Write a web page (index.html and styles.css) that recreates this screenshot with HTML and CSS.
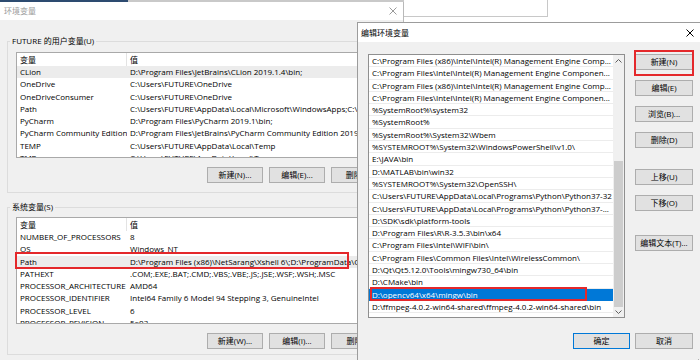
FILE: index.html
```html
<!DOCTYPE html>
<html lang="zh-CN">
<head>
    <meta charset="UTF-8">
    <title>环境变量</title>
    <link rel="stylesheet" href="styles.css">
</head>
<body>
<div class="desktop">
    <div class="strip"></div>
    <div class="window behind"></div>

    <!-- back dialog -->
    <div class="window env">
        <div class="titlebar">
            <span class="title">环境变量</span>
            <span class="close dim">
                <svg width="8" height="8" viewBox="0 0 8 8"><path d="M0.5 0.5L7.5 7.5M7.5 0.5L0.5 7.5" stroke="#9a9a9a" stroke-width="1" fill="none"/></svg>
            </span>
        </div>
        <div class="dlg-body">
            <fieldset class="group user">
                <legend>FUTURE 的用户变量(U)</legend>
                <div class="list vars user-list">
                    <div class="lhead"><span class="c1">变量</span><span class="c2">值</span></div>
                    <div class="lrow hl"><span class="c1">CLion</span><span class="c2">D:\Program Files\JetBrains\CLion 2019.1.4\bin;</span></div>
                    <div class="lrow"><span class="c1">OneDrive</span><span class="c2">C:\Users\FUTURE\OneDrive</span></div>
                    <div class="lrow"><span class="c1">OneDriveConsumer</span><span class="c2">C:\Users\FUTURE\OneDrive</span></div>
                    <div class="lrow"><span class="c1">Path</span><span class="c2">C:\Users\FUTURE\AppData\Local\Microsoft\WindowsApps;C:\Program Files</span></div>
                    <div class="lrow"><span class="c1">PyCharm</span><span class="c2">D:\Program Files\PyCharm 2019.1\bin;</span></div>
                    <div class="lrow"><span class="c1">PyCharm Community Edition</span><span class="c2">D:\Program Files\JetBrains\PyCharm Community Edition 2019.1\bin;</span></div>
                    <div class="lrow"><span class="c1">TEMP</span><span class="c2">C:\Users\FUTURE\AppData\Local\Temp</span></div>
                    <div class="lrow"><span class="c1">TMP</span><span class="c2">C:\Users\FUTURE\AppData\Local\Temp</span></div>
                </div>
                <div class="btnrow user-btns">
                    <button class="btn wide">新建(N)...</button>
                    <button class="btn wide">编辑(E)...</button>
                    <button class="btn wide">删除(D)</button>
                </div>
            </fieldset>

            <fieldset class="group sys">
                <legend>系统变量(S)</legend>
                <div class="listwrap">
                    <div class="list vars sys-list">
                        <div class="lhead"><span class="c1">变量</span><span class="c2">值</span></div>
                        <div class="lrow"><span class="c1">NUMBER_OF_PROCESSORS</span><span class="c2">8</span></div>
                        <div class="lrow"><span class="c1">OS</span><span class="c2">Windows_NT</span></div>
                        <div class="lrow hl"><span class="c1">Path</span><span class="c2">D:\Program Files (x86)\NetSarang\Xshell 6\;D:\ProgramData\Oracle\Java</span></div>
                        <div class="lrow"><span class="c1">PATHEXT</span><span class="c2">.COM;.EXE;.BAT;.CMD;.VBS;.VBE;.JS;.JSE;.WSF;.WSH;.MSC</span></div>
                        <div class="lrow"><span class="c1">PROCESSOR_ARCHITECTURE</span><span class="c2">AMD64</span></div>
                        <div class="lrow"><span class="c1">PROCESSOR_IDENTIFIER</span><span class="c2">Intel64 Family 6 Model 94 Stepping 3, GenuineIntel</span></div>
                        <div class="lrow"><span class="c1">PROCESSOR_LEVEL</span><span class="c2">6</span></div>
                        <div class="lrow"><span class="c1">PROCESSOR_REVISION</span><span class="c2">5e03</span></div>
                    </div>
                    <span class="mark mark-path"></span>
                </div>
                <div class="btnrow sys-btns">
                    <button class="btn wide">新建(W)...</button>
                    <button class="btn wide">编辑(I)...</button>
                    <button class="btn wide">删除(L)</button>
                </div>
            </fieldset>
        </div>
    </div>

    <!-- front dialog -->
    <div class="window edit">
        <div class="titlebar">
            <span class="title">编辑环境变量</span>
            <span class="close">
                <svg width="8" height="8" viewBox="0 0 8 8"><path d="M0.5 0.5L7.5 7.5M7.5 0.5L0.5 7.5" stroke="#000" stroke-width="1" fill="none"/></svg>
            </span>
        </div>
        <div class="dlg-body edit-body">
            <div class="edit-main">
                <div class="listwrap">
                    <div class="list paths">
                        <div class="prows">
                            <div class="prow">C:\Program Files (x86)\Intel\Intel(R) Management Engine Comp...</div>
                            <div class="prow">C:\Program Files\Intel\Intel(R) Management Engine Componen...</div>
                            <div class="prow">C:\Program Files (x86)\Intel\Intel(R) Management Engine Comp...</div>
                            <div class="prow">C:\Program Files\Intel\Intel(R) Management Engine Componen...</div>
                            <div class="prow">%SystemRoot%\system32</div>
                            <div class="prow">%SystemRoot%</div>
                            <div class="prow">%SystemRoot%\System32\Wbem</div>
                            <div class="prow">%SYSTEMROOT%\System32\WindowsPowerShell\v1.0\</div>
                            <div class="prow">E:\JAVA\bin</div>
                            <div class="prow">D:\MATLAB\bin\win32</div>
                            <div class="prow">%SYSTEMROOT%\System32\OpenSSH\</div>
                            <div class="prow">C:\Users\FUTURE\AppData\Local\Programs\Python\Python37-32</div>
                            <div class="prow">C:\Users\FUTURE\AppData\Local\Programs\Python\Python37-...</div>
                            <div class="prow">D:\SDK\sdk\platform-tools</div>
                            <div class="prow">D:\Program Files\R\R-3.5.3\bin\x64</div>
                            <div class="prow">C:\Program Files\Intel\WiFi\bin\</div>
                            <div class="prow">C:\Program Files\Common Files\Intel\WirelessCommon\</div>
                            <div class="prow">D:\Qt\Qt5.12.0\Tools\mingw730_64\bin</div>
                            <div class="prow">D:\CMake\bin</div>
                            <div class="prow selected">D:\opencv64\x64\mingw\bin</div>
                            <div class="prow">D:\ffmpeg-4.0.2-win64-shared\ffmpeg-4.0.2-win64-shared\bin</div>
                        </div>
                        <div class="sb">
                            <div class="sb-btn sb-up">
                                <svg width="7" height="4" viewBox="0 0 7 4"><path d="M0.5 3.5L3.5 0.5L6.5 3.5" stroke="#606060" fill="none"/></svg>
                            </div>
                            <div class="sb-track"><div class="sb-thumb"></div></div>
                            <div class="sb-btn sb-dn">
                                <svg width="7" height="4" viewBox="0 0 7 4"><path d="M0.5 0.5L3.5 3.5L6.5 0.5" stroke="#606060" fill="none"/></svg>
                            </div>
                        </div>
                    </div>
                    <span class="mark mark-sel"></span>
                </div>
                <div class="btncol">
                    <div class="listwrap">
                        <button class="btn">新建(N)</button>
                        <span class="mark mark-new"></span>
                    </div>
                    <button class="btn">编辑(E)</button>
                    <button class="btn">浏览(B)...</button>
                    <button class="btn">删除(D)</button>
                    <button class="btn move-up">上移(U)</button>
                    <button class="btn">下移(O)</button>
                    <button class="btn edit-text">编辑文本(T)...</button>
                </div>
            </div>
            <div class="btnrow ok-row">
                <button class="btn default">确定</button>
                <button class="btn">取消</button>
            </div>
            <svg class="grip" width="6" height="6" viewBox="0 0 6 6"><path d="M4 1h1v1H4zM2 3h1v1H2zM4 3h1v1H4zM0 5h1v1H0zM2 5h1v1H2zM4 5h1v1H4z" fill="#b0b0b0"/></svg>
        </div>
    </div>
</div>
</body>
</html>
```

FILE: styles.css
```css
body {
    margin: 0;
    background: #fff;
    font-family: "Open Sans", "Noto Sans CJK SC", sans-serif;
    font-size: 8px;
    color: #000;
}
.desktop {
    position: relative;
    width: 700px;
    height: 360px;
    overflow: hidden;
}
.strip {
    width: 404px;
    height: 2px;
    background: linear-gradient(to right, #2d4b70 0, #2d4b70 128px, #c9c9c9 128px);
}

/* windows */
.window {
    position: absolute;
    display: flex;
    flex-direction: column;
    overflow: hidden;
}
.behind {
    left: 404px;
    top: 0;
    width: 143px;
    height: 16px;
    background: #fff;
    border-right: 1px solid #c8c8c8;
    border-bottom: 1px solid #c8c8c8;
}
.env {
    left: 0;
    top: 2px;
    width: 404px;
    height: 370px;
    background: #f0f0f0;
    border-right: 1px solid #b9b9b9;
    box-sizing: border-box;
}
.edit {
    left: 357px;
    top: 22px;
    width: 344px;
    height: 350px;
    background: #f0f0f0;
    border-left: 1px solid #9c9c9c;
    border-top: 1px solid #9c9c9c;
    box-sizing: border-box;
}
.titlebar {
    flex: none;
    display: flex;
    align-items: center;
    justify-content: space-between;
    height: 18px;
    padding-left: 4px;
    background: #fff;
}
.edit .titlebar {
    height: 19px;
    padding-left: 3px;
}
.title {
    line-height: 12px;
}
.env .title {
    color: #9a9a9a;
}
.close {
    width: 22px;
    height: 18px;
    display: flex;
    align-items: center;
    justify-content: center;
}
.env .close {
    width: 21px;
}

/* group boxes */
.group {
    border: 1px solid #dcdcdc;
    margin: 15px 7px 0;
    padding: 5px 8px 9px;
    min-width: 0;
}
.group legend {
    padding: 0 2px;
    margin-left: -6px;
    line-height: 12px;
}
.group.sys {
    margin-top: 8px;
    padding: 4px 8px 5px;
}
.listwrap {
    position: relative;
}
.list {
    background: #fff;
    border: 1px solid #a9a9a9;
    overflow: hidden;
}
.user-list {
    height: 106px;
    box-sizing: border-box;
}
.sys-list {
    height: 107px;
    box-sizing: border-box;
}
.lhead,
.lrow {
    display: flex;
    white-space: nowrap;
}
.lhead {
    height: 13px;
    line-height: 13px;
}
.lrow {
    height: 12.3px;
    line-height: 12.3px;
}
.lrow.hl {
    background: #ececec;
}
.c1 {
    flex: none;
    width: 110px;
    padding-left: 3px;
    box-sizing: border-box;
    overflow: hidden;
}
.lhead .c1 {
    border-right: 1px solid #e3e3e3;
}
.c2 {
    padding-left: 3px;
}

/* red annotation boxes */
.mark {
    position: absolute;
    border: 2px solid #e4282b;
    box-sizing: border-box;
    pointer-events: none;
}
.mark-path {
    left: -1px;
    top: 35px;
    width: 334px;
    height: 17px;
}
.mark-sel {
    left: 2px;
    top: 233px;
    width: 217px;
    height: 14px;
}
.mark-new {
    left: -1px;
    top: -4px;
    width: 60px;
    height: 26px;
}

/* buttons */
.btnrow {
    display: flex;
    justify-content: flex-end;
    gap: 6px;
}
.user-btns {
    margin-top: 9px;
}
.sys-btns {
    margin-top: 9px;
}
.btn {
    display: block;
    width: 58px;
    height: 16px;
    padding: 0;
    background: #e1e1e1;
    border: 1px solid #adadad;
    box-sizing: border-box;
    font-family: inherit;
    font-size: 8px;
    line-height: 14px;
    color: #000;
    text-align: center;
    white-space: nowrap;
}
.btn.wide {
    width: 56px;
}
.btn.default {
    width: 57px;
    border-color: #0078d7;
}

/* edit dialog */
.edit-body {
    position: relative;
    flex: 1;
    padding: 12px 8px 0 10px;
}
.edit-main {
    display: flex;
    gap: 10px;
}
.paths {
    display: flex;
    width: 257px;
    height: 264px;
    box-sizing: border-box;
    border-color: #8f8f8f;
}
.prows {
    flex: 1;
    min-width: 0;
}
.prow {
    height: 12.3px;
    line-height: 12.3px;
    padding-left: 3px;
    white-space: nowrap;
    overflow: hidden;
    box-shadow: inset 0 -1px 0 #ececec;
}
.prow.selected {
    background: #0078d7;
    color: #fff;
    box-shadow: none;
}
.sb {
    flex: none;
    width: 11px;
    display: flex;
    flex-direction: column;
    background: #f0f0f0;
}
.sb-btn {
    display: flex;
    align-items: center;
    justify-content: center;
}
.sb-up {
    height: 12px;
}
.sb-dn {
    height: 10px;
}
.sb-track {
    flex: 1;
    display: flex;
    flex-direction: column;
    justify-content: flex-end;
}
.sb-thumb {
    height: 146px;
    margin: 0 1px;
    background: #cdcdcd;
}
.btncol {
    display: flex;
    flex-direction: column;
    gap: 10px;
}
.btncol .move-up {
    margin-top: 11px;
}
.btncol .edit-text {
    margin-top: 14px;
}
.ok-row {
    margin-top: 15px;
    gap: 5px;
}
.grip {
    position: absolute;
    right: 1px;
    bottom: 8px;
}
```
